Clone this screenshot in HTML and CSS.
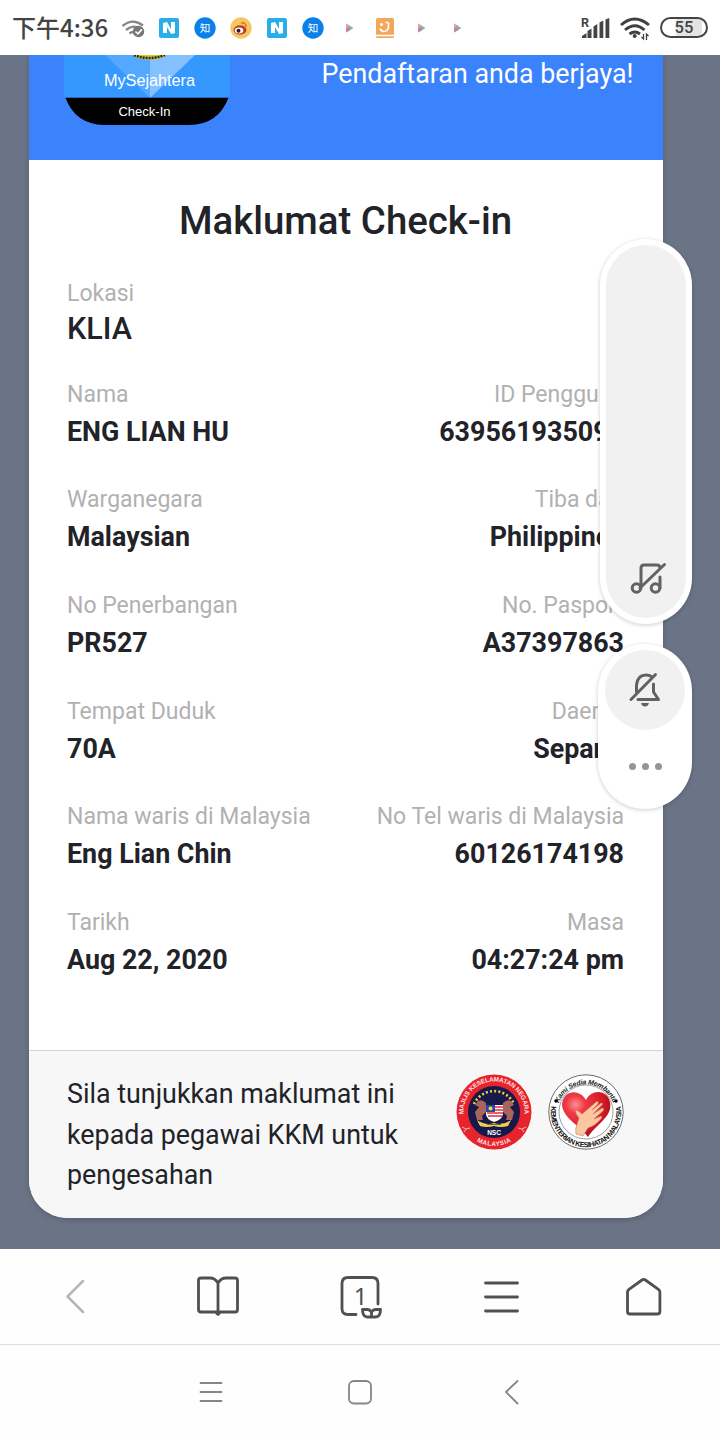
FILE: index.html
```html
<!DOCTYPE html>
<html lang="ms">
<head>
<meta charset="utf-8">
<title>MySejahtera Check-In</title>
<link rel="stylesheet" href="styles.css">
</head>
<body>
<div class="phone">
  <header class="status">
    <span class="clock">下午4:36</span>
    <svg class="notifications" width="350" height="30" viewBox="120 12 350 30" aria-hidden="true">
      <defs>
        <g id="news"><rect x="-10" y="-10" width="20" height="20" rx="2" fill="#28aee9"/><path d="M-6 5V-5l4-1 4 7v-7h4V5l-4 1-4-7v6z" fill="#fff"/></g>
        <g id="zhi"><circle r="10.700" fill="#0b80e8"/><text y="4" text-anchor="middle" class="zhi">知</text></g>
        <g id="play"><path d="M-3.500-4.500L0-2V2L-3.500 4.500z" fill="#c887bf"/><path d="M-3.500-4.500L1-2-3.500 0z" fill="#e4ae83"/><path d="M-1-3L4 0-1 3z" fill="#80b1c4"/><path d="M-3.500 4.500L-2-1 1 2z" fill="#d17b9c"/></g>
      </defs>
      <g fill="none" stroke="#858585" stroke-width="2.400">
        <path d="M122.500 25q10-8.500 20.500-.5M126 29q6.500-5.500 12.500-2M129.500 32.500q3-2.500 5-1"/>
      </g>
      <circle cx="138.500" cy="30.500" r="5.700" fill="#777"/><path d="M135.500 30.500l2.400 2.400 4-4.500" fill="none" stroke="#fff" stroke-width="1.600"/>
      <use href="#news" x="169" y="27"/><use href="#zhi" x="205" y="27"/>
      <circle cx="241" cy="27" r="10.700" fill="#f5c760"/><ellipse cx="240" cy="29" rx="6.500" ry="4.700" fill="#c83b25"/><ellipse cx="239" cy="29.500" rx="4.300" ry="3" fill="#fff"/><circle cx="238.500" cy="29.700" r="2" fill="#222"/><path d="M241 22q5-1 5 4" fill="none" stroke="#db6c2d" stroke-width="1.500"/>
      <use href="#news" x="277" y="27"/><use href="#zhi" x="313" y="27"/>
      <use href="#play" x="349.500" y="27"/>
      <rect x="376" y="17" width="18" height="20" rx="1.500" fill="#f3a75c"/><path d="M376 34.500h18" stroke="#fff" stroke-width="1.500"/><circle cx="381.500" cy="23.500" r="1.500" fill="#fff"/><path d="M388.500 21.500v4q-.5 5-4.500 5-3 0-4-3M385.500 21.500h3" fill="none" stroke="#fff" stroke-width="1.600"/>
      <use href="#play" x="421.500" y="27"/><use href="#play" x="457.500" y="27"/>
    </svg>
    <svg class="signals" width="76" height="30" viewBox="580 12 76 30" aria-hidden="true">
      <text x="581" y="26" class="roaming">R</text>
      <path d="M582 37v-2l4.500-3v5zM587.500 37v-7l4-2.500v9.500zM593.500 37V25.500l3.800-2.500v14zM599.500 37V21.500l3.800-2v17.500zM605.500 37V18.500l3.800-1.500v20z" fill="#444"/>
      <g fill="none" stroke="#404040" stroke-width="2.900"><path d="M621 24q13.500-12 28 0M625 29q10-8.500 19.500 0M629.500 33q5.500-4 10.500 0"/></g>
      <circle cx="634.700" cy="35" r="2" fill="#404040"/><path d="M643.500 33v5l-2-2M646.500 39v-6l2 2" fill="none" stroke="#404040" stroke-width="1.300"/>
    </svg>
    <span class="battery">55</span>
  </header>

  <main class="page">
    <article class="card">
      <div class="banner">
        <svg class="app-logo" width="167" height="71" viewBox="0 0 167 71" role="img" aria-label="MySejahtera Check-In">
          <path d="M0 0h166v42H0z" fill="#3598ff"/>
          <path d="M41 0h45v43z" fill="#53a8ff"/><path d="M86 0h45L86 43z" fill="#86c1ff"/>
          <ellipse cx="85.500" cy="-1" rx="17" ry="5.700" fill="#d7c92e"/><path d="M70 0q15 6 31 0" fill="none" stroke="#26261c" stroke-width="2.500" stroke-dasharray="2 1"/>
          <path d="M1.500 42.700h163Q154 70 125 70H40Q11 69 1.500 42.700z" fill="#000"/>
          <text x="85.500" y="31" text-anchor="middle" textLength="91" class="logo-name">MySejahtera</text>
          <text x="80.500" y="61" text-anchor="middle" class="logo-sub">Check-In</text>
        </svg>
        <p class="success">Pendaftaran anda berjaya!</p>
      </div>
      <section class="details">
        <h1 class="title">Maklumat Check-in</h1>
        <div class="location"><div class="label">Lokasi</div><div class="place">KLIA</div></div>
        <div class="row"><div><div class="label">Nama</div><div class="value">ENG LIAN HU</div></div><div class="end"><div class="label">ID Pengguna</div><div class="value">639561935098</div></div></div>
        <div class="row"><div><div class="label">Warganegara</div><div class="value">Malaysian</div></div><div class="end"><div class="label">Tiba dari</div><div class="value">Philippines</div></div></div>
        <div class="row"><div><div class="label">No Penerbangan</div><div class="value">PR527</div></div><div class="end"><div class="label">No. Pasport</div><div class="value">A37397863</div></div></div>
        <div class="row"><div><div class="label">Tempat Duduk</div><div class="value">70A</div></div><div class="end"><div class="label">Daerah</div><div class="value">Sepang</div></div></div>
        <div class="row"><div><div class="label">Nama waris di Malaysia</div><div class="value">Eng Lian Chin</div></div><div class="end"><div class="label">No Tel waris di Malaysia</div><div class="value">60126174198</div></div></div>
        <div class="row"><div><div class="label">Tarikh</div><div class="value">Aug 22, 2020</div></div><div class="end"><div class="label">Masa</div><div class="value">04:27:24 pm</div></div></div>
      </section>
      <footer class="notice">
        <p class="notice-text">Sila tunjukkan maklumat ini<br>kepada pegawai KKM untuk<br>pengesahan</p>
        <svg class="emblem" width="76" height="76" viewBox="-38 -38 76 76">
          <defs><path id="nscTop" d="M-28 12A30.500 30.500 0 1 1 28 12"/><path id="nscLow" d="M-34 0A34 34 0 0 0 34 0"/></defs>
          <circle r="37.500" fill="#e8232c"/><circle r="26" fill="#17194b"/>
          <text class="nsc-ring"><textPath href="#nscTop" startOffset="50%" text-anchor="middle" textLength="100">MAJLIS KESELAMATAN NEGARA</textPath></text>
          <text class="nsc-ring"><textPath href="#nscLow" startOffset="50%" text-anchor="middle" textLength="36">MALAYSIA</textPath></text>
          <path d="M-20-8A22 22 0 0 1 20-8" fill="none" stroke="#edcf43" stroke-width="2.600" stroke-dasharray="2 2.200"/>
          <path d="M-8-9q-4-4-8-2l-3 4 4 2-4 5 2 8h6l-1-4 4-4zM9-9q4-4 8-2l3 4-4 2 4 5-2 8h-6l1-4-4-4z" fill="#a9655c"/>
          <path d="M-8-7H9V2Q8 8 0 10-8 7-8 2z" fill="#fff"/><path d="M0-5h9M0-2h9M-7 1H9M-6 4H8" stroke="#dd303a" stroke-width="1.500"/><path d="M-8-7h9v7h-9z" fill="#2949a0"/><circle cx="-3.500" cy="-3.500" r="2" fill="#f4da4b"/>
          <path d="M-17 8q9 6 17 3 8 3 17-3l-3 6q-7 2-14 0-7 2-14 0z" fill="#ebd14b"/><path d="M-7 12.500H7" stroke="#7a6425"/>
          <text y="23" text-anchor="middle" class="nsc-name">NSC</text>
          <path d="M-32 15l4 2-2 3m2-3l4-1M32 15l-4 2 2 3m-2-3l-4-1" fill="none" stroke="#f7b7b7"/>
        </svg>
        <svg class="emblem" width="76" height="76" viewBox="-38 -38 76 76">
          <defs>
            <path id="kkmTop" d="M-28.500-4A29 29 0 0 1 28.500-4"/><path id="kkmLow" d="M-34.500-7A35.200 35.200 0 1 0 34.500-7"/>
            <radialGradient id="heart" cx=".28" cy=".28" r=".8"><stop offset="0" stop-color="#ff8f91"/><stop offset=".25" stop-color="#ee3945"/><stop offset=".7" stop-color="#d61c26"/><stop offset="1" stop-color="#a70d17"/></radialGradient>
          </defs>
          <circle r="37.200" fill="#fff" stroke="#444" stroke-width=".8"/><circle r="27" fill="none" stroke="#777" stroke-width=".7"/>
          <text class="kkm-motto"><textPath href="#kkmTop" startOffset="50%" text-anchor="middle" textLength="70">Kami Sedia Membantu</textPath></text>
          <text class="kkm-ring"><textPath href="#kkmLow" startOffset="50%" text-anchor="middle" textLength="122">KEMENTERIAN KESIHATAN MALAYSIA</textPath></text>
          <circle cx="-30" cy="-11" r="1.700"/><circle cx="30" cy="-11" r="1.700"/>
          <path d="M0-12C5-23 21-23 24-10 27 5 10 12 2 25-5 14-24 6-24-8-22-23-6-23 0-12z" fill="url(#heart)"/>
          <path d="M-10 22q-1-6 1-10l2-6q-3-3-4-8 3 0 7 4L10-10q3-2 2 2l-6 6L15-9q3 0 1 2L7 2l9-6q3 0 1 3L8 7l7-3q2 0 0 3-6 7-13 9l-5 8z" fill="#fbc7a2" stroke="#bd6955" stroke-width=".5"/>
        </svg>
      </footer>
    </article>
  </main>

  <nav class="browser-bar">
    <svg width="144" height="95" viewBox="0 0 144 95"><path d="M83 32L67.500 47.500 83 63" class="back"/></svg>
    <svg width="144" height="95" viewBox="144 0 144 95" class="tool"><path d="M218 34q-3-5-8-5h-9q-2.500 0-2.500 2.500v29q0 2.500 2.500 2.500h34q2.500 0 2.500-2.500v-29q0-2.500-2.500-2.500h-9q-5 0-8 5v31M216.500 64l1.500 1.500 1.500-1.500"/></svg>
    <svg width="144" height="95" viewBox="288 0 144 95" class="tool"><path d="M356 65.500h-8q-6 0-6-6v-25q0-6 6-6h24q6 0 6 6V55"/><path d="M371.500 67q1-6-4-6.500h-5q0 7.500 5 7.500h8q5 0 5-7.500h-5q-5 .5-4 6.500z" class="leaf"/><text x="360.500" y="56" text-anchor="middle" class="tab-count">1</text></svg>
    <svg width="144" height="95" viewBox="432 0 144 95" class="tool"><path d="M485.500 34h32M485.500 48h32M485.500 62h32"/></svg>
    <svg width="144" height="95" viewBox="576 0 144 95" class="tool"><path d="M627.500 43q0-1.500 1.500-2.700l13-9.300q1.700-1.200 3.400 0l13 9.300q1.500 1.200 1.500 2.700v19.500q0 2.500-2.500 2.500H630q-2.500 0-2.500-2.500z"/></svg>
  </nav>
  <nav class="system-bar">
    <svg width="720" height="95" viewBox="0 1345 720 95"><path d="M200.500 1383h21M200.500 1392h21M200.500 1401h21"/><rect x="349" y="1381" width="22" height="22.500" rx="5"/><path d="M517.500 1381L506 1392l11.500 11.500"/></svg>
  </nav>

  <aside class="volume">
    <div class="volume-track"><svg width="80" height="80" viewBox="606 538 80 80" class="sound"><path d="M641 588v-20q0-3 3-3h13q3 0 3 3M660 577v11M664.500 564.500L640 588"/><circle cx="636.500" cy="588" r="4.300"/><circle cx="655.500" cy="588" r="4.300"/></svg></div>
  </aside>
  <aside class="ringer">
    <div class="mute"><svg width="80" height="80" viewBox="605 650 80 80" class="sound"><path d="M636.500 692v-7q1-10 9.500-10 4 0 6.500 2.500M653.500 684v8l5 7.500H638M655.500 674.500L631 699.500"/><path d="M641 703h8q-1 3.500-4 3.500t-4-3.500z" class="clapper"/></svg></div>
    <div class="more"><i></i><i></i><i></i></div>
  </aside>
</div>
</body>
</html>
```
FILE: styles.css
```css
* { box-sizing: border-box; }
body { margin: 0; background: #fff; font-family: Roboto, "Noto Sans CJK SC", sans-serif; color: #212329; }
svg { display: block; flex: none; }
p, h1 { margin: 0; }

.phone { position: relative; width: 720px; height: 1440px; overflow: hidden; display: grid; grid-template-rows: 55px 1194px 96px 95px; }

.status { display: flex; align-items: center; padding: 0 12px; background: #fff; }
.clock { width: 108px; padding-bottom: 2px; white-space: nowrap; font: 500 24px/30px "Noto Sans CJK SC", sans-serif; color: #444; }
.signals { margin-left: 110px; }
.battery { width: 48px; height: 21px; margin-left: 4px; border: 2.5px solid #444; border-radius: 11px; background: linear-gradient(90deg, #fff 28%, #e3e3e3 36%, #e3e3e3 90%, #fff 90%); text-align: center; font: 500 16.5px/17px Roboto, sans-serif; color: #444; flex: none; }
.zhi { font: 400 10.5px "Noto Sans CJK SC", sans-serif; fill: #fff; }
.roaming { font: 700 12.5px Roboto, sans-serif; fill: #444; }

.page { overflow: hidden; background: #6a7486; padding-left: 29px; }
.card { width: 633.5px; height: 1163px; overflow: hidden; display: grid; grid-template-rows: 105px 890px 168px; border-radius: 0 0 38px 38px; background: #fff; box-shadow: 0 2px 5px rgba(30, 38, 52, .25); }
.banner { display: flex; justify-content: space-between; padding: 0 29px 0 35px; background: #3b82fd; }
.success { padding-top: 2px; font-size: 26.85px; line-height: 34px; color: #fff; white-space: nowrap; }
.logo-name { font: 16.3px "Liberation Sans", sans-serif; fill: #fff; }
.logo-sub { font: 13px "Liberation Sans", sans-serif; fill: #fff; }

.details { padding: 38px 38.5px 0 38px; }
.title { font-size: 38.4px; line-height: 46px; font-weight: 500; text-align: center; white-space: nowrap; }
.location { margin-top: 32.5px; height: 101.3px; }
.label { font-size: 23px; line-height: 33px; color: #b1b1b1; white-space: nowrap; }
.place { font-size: 30.5px; line-height: 38px; font-weight: 500; }
.row { display: flex; justify-content: space-between; height: 105.65px; }
.value { font-size: 26.85px; line-height: 42px; font-weight: 700; white-space: nowrap; }
.end { text-align: right; }

.notice { display: flex; align-items: flex-start; padding: 23px 39px 0 38px; border-top: 1.5px solid #d3d4d5; background: #f7f7f7; }
.notice-text { flex: 1; font-size: 26.85px; line-height: 40.5px; white-space: nowrap; }
.emblem { margin-right: 16px; }
.emblem:last-child { margin-right: 0; }
.nsc-ring { font: 700 6.4px "Liberation Sans", sans-serif; fill: #ffe5e2; }
.nsc-name { font: 700 6.5px "Liberation Sans", sans-serif; fill: #fff; }
.kkm-motto { font: italic 700 7px "Liberation Sans", sans-serif; fill: #222; }
.kkm-ring { font: 700 7.3px "Liberation Sans", sans-serif; fill: #111; }

.browser-bar { display: flex; background: #fefefe; border-bottom: 1px solid #dedede; }
.back { fill: none; stroke: #b5b5b5; stroke-width: 2.5; stroke-linecap: round; stroke-linejoin: round; }
.tool { fill: none; stroke: #505050; stroke-width: 2.8; stroke-linecap: round; stroke-linejoin: round; }
.leaf { stroke-width: 2.8; }
.tab-count { font: 24px "Noto Sans", sans-serif; fill: #505050; stroke: none; }
.system-bar { background: #fefefe; }
.system-bar svg { fill: none; stroke: #858585; stroke-width: 1.8; stroke-linecap: round; stroke-linejoin: round; }

.volume, .ringer { position: absolute; background: #fff; border-radius: 47px; box-shadow: 0 1px 4px rgba(0, 0, 0, .2); }
.volume { left: 600px; top: 239px; width: 92px; height: 385px; padding: 6px; }
.volume-track { display: flex; align-items: flex-end; height: 373px; border-radius: 40px; background: #f1f1f1; }
.ringer { left: 598px; top: 644px; width: 94px; height: 165px; padding: 6px 7px; }
.mute { width: 80px; height: 80px; border-radius: 50%; background: #f1f1f1; }
.sound { fill: none; stroke: #626262; stroke-width: 3; stroke-linecap: round; stroke-linejoin: round; }
.sound .clapper { fill: #626262; stroke: none; }
.more { display: flex; justify-content: center; gap: 6px; padding-top: 33px; }
.more i { width: 7px; height: 7px; border-radius: 50%; background: #969696; }
```
